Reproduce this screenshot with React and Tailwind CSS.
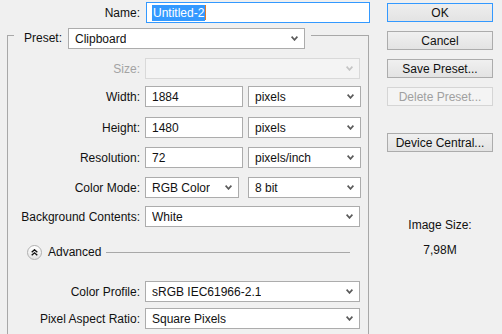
const Chevron = ({ disabled }) => (
  <svg width="7" height="5" viewBox="0 0 7 5" className="shrink-0">
    <polyline
      points="0.6,0.6 3.5,3.9 6.4,0.6"
      fill="none"
      stroke={disabled ? "#c4c4c4" : "#5a5a5a"}
      strokeWidth="1.6"
    />
  </svg>
);

const Select = ({ value, className = "", disabled }) => (
  <div
    className={`h-[21px] flex items-center justify-between pl-[6px] pr-[6px] border ${
      disabled ? "border-[#d9d9d9] bg-[#f4f4f4]" : "border-[#acacac] bg-white"
    } ${className}`}
  >
    <span className="truncate">{value}</span>
    <Chevron disabled={disabled} />
  </div>
);

const Input = ({ value, className = "" }) => (
  <div
    className={`h-[21px] flex items-center px-[6px] border border-[#acacac] bg-white ${className}`}
  >
    {value}
  </div>
);

const Row = ({ label, mt, disabled, children }) => (
  <div className={`flex items-center h-[21px] ${mt}`}>
    <span
      className={`w-[132px] text-right ${disabled ? "text-[#a3a3a3]" : ""}`}
    >
      {label}
    </span>
    <div className="ml-[5px] flex gap-[5px]">{children}</div>
  </div>
);

const Button = ({ children, mt, primary, disabled }) => (
  <div
    className={`h-[19px] w-[106px] flex items-center justify-center border ${mt} ${
      primary
        ? "border-[#3399ff] bg-gradient-to-b from-[#eeeeee] to-[#e3e3e3]"
        : disabled
        ? "border-[#d5d5d5] bg-[#f4f4f4] text-[#a0a0a0]"
        : "border-[#acacac] bg-gradient-to-b from-[#f0f0f0] to-[#e3e3e3]"
    }`}
  >
    {children}
  </div>
);

export default function App() {
  return (
    <div className="w-[502px] h-[334px] overflow-hidden bg-[#f0f0f0] flex font-['Liberation_Sans',Arial,sans-serif] text-[12px] text-[#111]">
      {/* Left: form */}
      <div className="w-[387px] shrink-0 pt-[2px]">
        <div className="flex items-center h-[21px]">
          <span className="w-[140px] text-right">Name:</span>
          <div className="ml-[6px] w-[224px] h-[21px] flex items-center pl-[5px] border border-[#3399ff] bg-white">
            <span className="bg-[#3399ff] text-white leading-[16px] px-[1px]">
              Untitled-2
            </span>
            <span className="w-[1px] h-[15px] bg-[#e07a2a]" />
          </div>
        </div>

        <fieldset className="ml-[7px] mt-[5px] w-[362px] h-[400px] border border-[#a8a8a8]">
          <legend className="ml-[6px] pr-[6px] h-[14px] flex items-start">
            <span className="w-[48px] h-[21px] leading-[21px] text-right">
              Preset:
            </span>
            <Select value="Clipboard" className="ml-[6px] w-[237px]" />
          </legend>

          <Row label="Size:" mt="mt-[16px]" disabled>
            <Select value="" className="w-[215px]" disabled />
          </Row>
          <Row label="Width:" mt="mt-[7px]">
            <Input value="1884" className="w-[98px]" />
            <Select value="pixels" className="w-[113px]" />
          </Row>
          <Row label="Height:" mt="mt-[10px]">
            <Input value="1480" className="w-[98px]" />
            <Select value="pixels" className="w-[113px]" />
          </Row>
          <Row label="Resolution:" mt="mt-[9px]">
            <Input value="72" className="w-[98px]" />
            <Select value="pixels/inch" className="w-[113px]" />
          </Row>
          <Row label="Color Mode:" mt="mt-[9px]">
            <Select value="RGB Color" className="w-[94px]" />
            <Select value="8 bit" className="ml-[4px] w-[113px]" />
          </Row>
          <Row label="Background Contents:" mt="mt-[8px]">
            <Select value="White" className="w-[215px]" />
          </Row>

          {/* Advanced */}
          <div className="flex items-center h-[16px] mt-[17px] mr-[18px]">
            <div className="ml-[19px] w-[15px] h-[15px] rounded-full border border-[#b0b0b0] bg-gradient-to-b from-white to-[#e4e4e4] flex items-center justify-center">
              <svg width="7" height="7" viewBox="0 0 7 7">
                <polyline points="0.7,3.2 3.5,0.8 6.3,3.2" fill="none" stroke="#111" strokeWidth="1.4" />
                <polyline points="0.7,6.2 3.5,3.8 6.3,6.2" fill="none" stroke="#111" strokeWidth="1.4" />
              </svg>
            </div>
            <span className="ml-[6px]">Advanced</span>
            <div className="ml-[5px] flex-1 h-[1px] bg-[#a8a8a8]" />
          </div>

          <Row label="Color Profile:" mt="mt-[21px]">
            <Select value="sRGB IEC61966-2.1" className="w-[215px]" />
          </Row>
          <Row label="Pixel Aspect Ratio:" mt="mt-[6px]">
            <Select value="Square Pixels" className="w-[215px]" />
          </Row>
        </fieldset>
      </div>

      {/* Right: buttons */}
      <div className="w-[106px] shrink-0 flex flex-col items-center pt-[3px]">
        <Button primary>OK</Button>
        <Button mt="mt-[9px]">Cancel</Button>
        <Button mt="mt-[9px]">Save Preset...</Button>
        <Button mt="mt-[9px]" disabled>
          Delete Preset...
        </Button>
        <Button mt="mt-[27px]">Device Central...</Button>
        <div className="mt-[66px] h-[14px] leading-[14px]">Image Size:</div>
        <div className="mt-[11px] h-[14px] leading-[14px]">7,98M</div>
      </div>
    </div>
  );
}
